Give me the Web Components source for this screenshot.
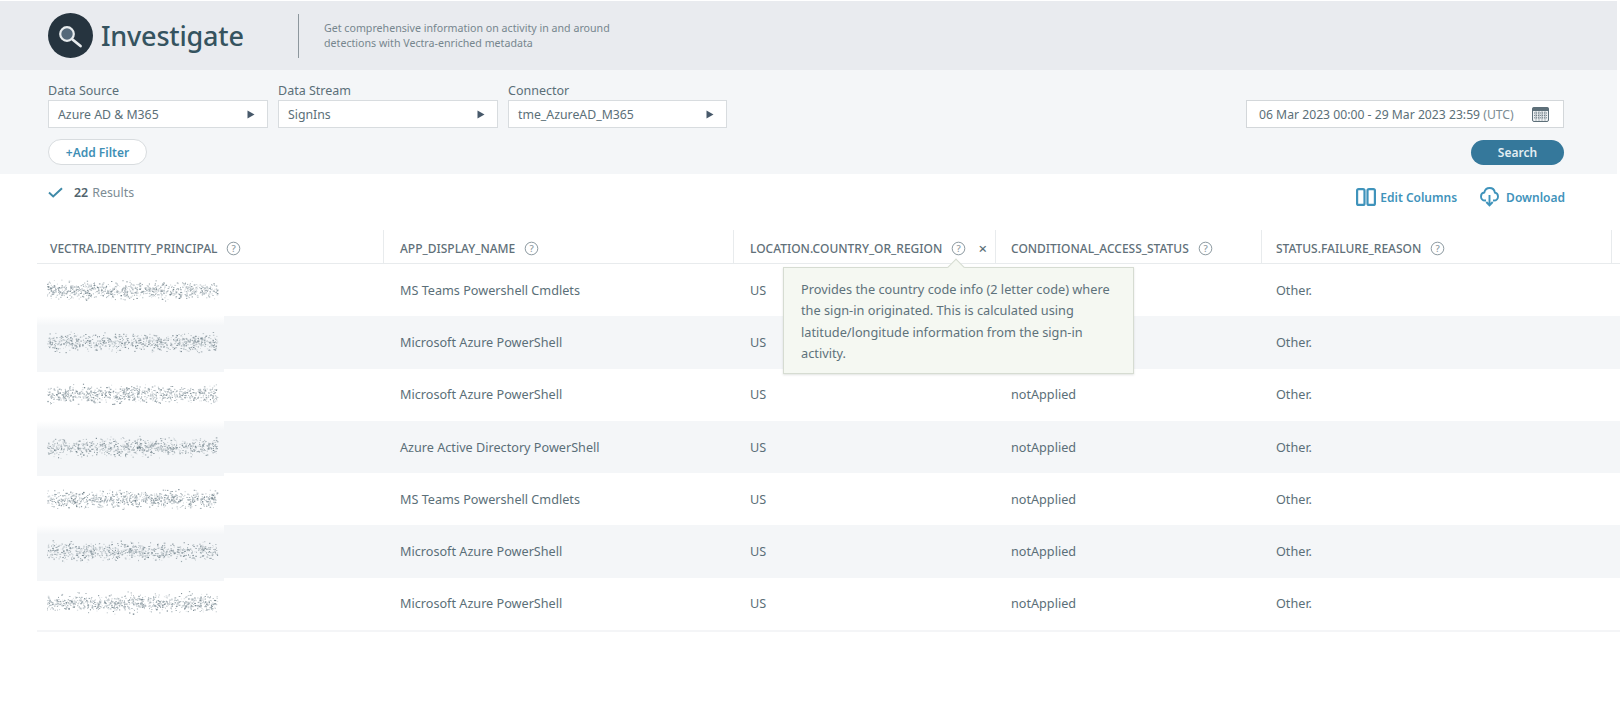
<!DOCTYPE html>
<html>
<head>
<meta charset="utf-8">
<title>Investigate</title>
<style>
  body { margin: 0; background: #fff; font-family: "Noto Sans", "Open Sans", sans-serif; color: #5b6f78; }
  investigate-page { width: 1622px; height: 710px; overflow: hidden; }
</style>
</head>
<body>
<investigate-page></investigate-page>
<script>
const ICONS = {
  help: `<svg width="15" height="15" viewBox="0 0 15 15"><circle cx="7.5" cy="7.5" r="6.3" fill="none" stroke="#8d9aa1" stroke-width="1"/><text x="7.5" y="11" text-anchor="middle" font-size="9.5" font-family="Noto Sans" fill="#8d9aa1">?</text></svg>`,
  check: `<svg width="15" height="11" viewBox="0 0 15 11"><path d="M1 5.6 L5.2 9.4 L14 1.2" fill="none" stroke="#3f8aa8" stroke-width="2"/></svg>`,
  caret: `<svg width="8" height="9" viewBox="0 0 8 9"><path d="M0.5 0.5 L7.5 4.5 L0.5 8.5 Z" fill="#47596a"/></svg>`,
  calendar: `<svg width="17" height="15" viewBox="0 0 17 15"><rect x="0.5" y="0.5" width="16" height="14" rx="1.5" fill="#eef1f3" stroke="#5d6f79"/><rect x="0.5" y="0.5" width="16" height="3.5" fill="#5d6f79"/><path d="M2 6h13M2 8.4h13M2 10.8h13M4 4.5v9M7 4.5v9M10 4.5v9M13 4.5v9" stroke="#5d6f79" stroke-width=".9" stroke-dasharray="1.2 .8"/></svg>`,
  columns: `<svg width="20" height="18" viewBox="0 0 20 18"><rect x="1.1" y="1.1" width="7.4" height="15.8" rx="1.5" fill="none" stroke="#3f93bb" stroke-width="2.2"/><rect x="11.5" y="1.1" width="7.4" height="15.8" rx="1.5" fill="none" stroke="#3f93bb" stroke-width="2.2"/></svg>`,
  download: `<svg width="19" height="20" viewBox="0 0 19 20"><path d="M6 13.5 H5 C2.5 13.5 1 11.6 1 9.4 C1 7.3 2.4 5.7 4.3 5.5 C4.9 2.8 7 1 9.6 1 C12.4 1 14.5 3 14.9 5.6 C16.8 5.9 18 7.5 18 9.4 C18 11.6 16.5 13.5 14 13.5 H13" fill="none" stroke="#3f93bb" stroke-width="1.9"/><path d="M9.5 8 V18 M6.3 15 L9.5 18.4 L12.7 15" fill="none" stroke="#3f93bb" stroke-width="1.9"/></svg>`,
  search: `<svg width="45" height="45" viewBox="0 0 45 45"><circle cx="22.5" cy="22.5" r="22.5" fill="#26343f"/><circle cx="19" cy="21" r="6.8" fill="#55697a" stroke="#e8ecee" stroke-width="2.2"/><path d="M24.5 26.5 L32.5 33" stroke="#e8ecee" stroke-width="2.8" stroke-linecap="round"/></svg>`
};

class AppHeader extends HTMLElement {
  constructor() {
    super();
    this.attachShadow({ mode: 'open' }).innerHTML = `
      <style>
        :host { display: flex; align-items: center; height: 69px; margin-top: 1px; background: #e9ebef; padding-left: 48px; }
        .logo { display: flex; width: 45px; height: 45px; margin-right: 8px; }
        h1 { margin: 0; width: 197px; font: 500 27px/44px "Noto Sans", sans-serif; color: #35535f; letter-spacing: -.2px; }
        .rule { width: 1px; height: 44px; background: #8d979d; margin-right: 25px; }
        p { margin: 0; font-size: 10.65px; line-height: 15px; color: #76868e; }
      </style>
      <div class="logo">${ICONS.search}</div>
      <h1>Investigate</h1>
      <div class="rule"></div>
      <p>Get comprehensive information on activity in and around<br>detections with Vectra-enriched metadata</p>`;
  }
}

class FilterSelect extends HTMLElement {
  constructor() {
    super();
    this.attachShadow({ mode: 'open' }).innerHTML = `
      <style>
        :host { display: block; width: 220px; }
        label { display: block; font-size: 12.5px; line-height: 18px; color: #5b6f78; }
        div { display: flex; justify-content: space-between; align-items: center; box-sizing: border-box; height: 28px; padding: 0 12px 0 9px; background: #fff; border: 1px solid #d8dcdf; font-size: 12.3px; color: #5b6f78; }
      </style>
      <label>${this.getAttribute('label')}</label>
      <div><span>${this.getAttribute('value')}</span>${ICONS.caret}</div>`;
  }
}

class FilterBar extends HTMLElement {
  constructor() {
    super();
    this.attachShadow({ mode: 'open' }).innerHTML = `
      <style>
        :host { display: flex; justify-content: space-between; box-sizing: border-box; height: 104px; background: #f4f6f8; padding: 12px 53px 0 48px; }
        .selects { display: flex; gap: 10px; }
        .add { display: flex; align-items: center; justify-content: center; box-sizing: border-box; width: 99px; height: 26px; margin-top: 11px; border: 1px solid #d8dcdf; border-radius: 13px; background: #fff; font-size: 12px; font-weight: 600; color: #3f8fb5; }
        .right { display: flex; flex-direction: column; align-items: flex-end; padding-top: 18px; }
        .date { display: flex; justify-content: space-between; align-items: center; box-sizing: border-box; width: 318px; height: 28px; padding: 0 14px 0 12px; background: #fff; border: 1px solid #d3d7da; font-size: 12.2px; color: #5b6f78; }
        .date span span { color: #7c8c94; }
        .search { display: flex; align-items: center; justify-content: center; width: 93px; height: 25px; margin-top: 12px; border-radius: 13px; background: #35789b; color: #e3eef3; font-size: 12px; font-weight: 600; }
      </style>
      <div>
        <div class="selects">
          <filter-select label="Data Source" value="Azure AD &amp; M365"></filter-select>
          <filter-select label="Data Stream" value="SignIns"></filter-select>
          <filter-select label="Connector" value="tme_AzureAD_M365" style="width:219px"></filter-select>
        </div>
        <div class="add">+Add Filter</div>
      </div>
      <div class="right">
        <div class="date"><span>06 Mar 2023 00:00 - 29 Mar 2023 23:59 <span>(UTC)</span></span>${ICONS.calendar}</div>
        <div class="search">Search</div>
      </div>`;
  }
}

class ResultsBar extends HTMLElement {
  constructor() {
    super();
    this.attachShadow({ mode: 'open' }).innerHTML = `
      <style>
        :host { display: flex; justify-content: space-between; box-sizing: border-box; height: 56px; padding: 11px 57px 0 48px; }
        .count { display: flex; align-items: center; height: 14px; font-size: 12.4px; color: #7c8c94; }
        .count svg { margin-right: 11px; }
        .count b { margin-right: 4px; color: #51646d; font-weight: 600; }
        .actions { display: flex; gap: 23px; margin-top: 2px; }
        .action { display: flex; align-items: center; gap: 4px; height: 20px; font-size: 12px; font-weight: 600; color: #3f93bb; }
      </style>
      <div class="count">${ICONS.check}<b>22</b> Results</div>
      <div class="actions">
        <div class="action">${ICONS.columns}Edit Columns</div>
        <div class="action" style="gap:7px">${ICONS.download}Download</div>
      </div>`;
  }
}

// grey speckle standing in for the blurred-out identity names
class RedactedName extends HTMLElement {
  connectedCallback() {
    let seed = Number(this.getAttribute('seed')) * 7919 + 13;
    const rnd = () => (seed = (seed * 16807) % 2147483647) / 2147483647;
    let dots = '';
    for (let i = 0; i < 800; i++) {
      const x = 4 + rnd() * 170;
      const y = 15 + (rnd() + rnd() + rnd() - 1.5) * 8;
      const shade = ['#aab4b9', '#c3cbcf', '#8f9ca3', '#d8dde0', '#76868e', '#a0adb3'][Math.floor(rnd() * 6)];
      dots += `<rect x="${x.toFixed(1)}" y="${y.toFixed(1)}" width="${(0.6 + rnd() * 1.1).toFixed(1)}" height="${(0.6 + rnd() * .7).toFixed(1)}" fill="${shade}"/>`;
    }
    this.attachShadow({ mode: 'open' }).innerHTML = `
      <style>:host { display: block; width: 182px; height: 30px; }</style>
      <svg width="182" height="30" viewBox="0 0 182 30">${dots}</svg>`;
  }
}

class HelpTip extends HTMLElement {
  constructor() {
    super();
    this.attachShadow({ mode: 'open' }).innerHTML = `
      <style>
        :host { position: absolute; left: 783px; top: 267px; box-sizing: border-box; width: 351px; height: 107px; padding: 11px 17px; background: #f5f8f2; border: 1px solid #d6dcd2; box-shadow: 0 1px 2px rgba(90,100,90,.18); font-size: 12.75px; line-height: 21.3px; color: #5e727b; z-index: 2; white-space: nowrap; }
        i { position: absolute; left: 166px; top: -7px; width: 11px; height: 11px; background: #f5f8f2; border: solid #d6dcd2; border-width: 1px 0 0 1px; transform: rotate(45deg); }
      </style>
      <i></i><slot></slot>`;
  }
}

class DataTable extends HTMLElement {
  constructor() {
    super();
    const heads = ['VECTRA.IDENTITY_PRINCIPAL', 'APP_DISPLAY_NAME', 'LOCATION.COUNTRY_OR_REGION', 'CONDITIONAL_ACCESS_STATUS', 'STATUS.FAILURE_REASON'];
    const apps = ['MS Teams Powershell Cmdlets', 'Microsoft Azure PowerShell', 'Microsoft Azure PowerShell', 'Azure Active Directory PowerShell', 'MS Teams Powershell Cmdlets', 'Microsoft Azure PowerShell', 'Microsoft Azure PowerShell'];
    const headCells = heads.map((h, i) => `<div class="th">${h}<span class="q">${ICONS.help}</span>${i === 2 ? '<span class="x">×</span>' : ''}</div>`).join('');
    // the first two status cells sit behind the tooltip, so they stay empty
    const rows = apps.map((app, i) => `
      <div class="row">
        <div class="td first"><redacted-name seed="${i + 3}"></redacted-name></div>
        <div class="td">${app}</div>
        <div class="td">US</div>
        <div class="td">${i < 2 ? '' : 'notApplied'}</div>
        <div class="td">Other.</div>
      </div>`).join('');
    this.attachShadow({ mode: 'open' }).innerHTML = `
      <style>
        :host { display: block; width: 1583px; margin-left: 37px; border-bottom: 2px solid #f4f5f7; }
        .head, .row { display: grid; grid-template-columns: 347px 350px 262px 266px 350px 8px; }
        .head { height: 34px; border-bottom: 1px solid #e8ebed; box-sizing: border-box; }
        .th { display: flex; align-items: center; padding: 3px 8px 0 13px; border-right: 1px solid #e8ebed; font-size: 12px; font-weight: 500; color: #5f7079; white-space: nowrap; }
        .th:nth-child(n+2) { padding-left: 16px; }
        .th:nth-child(n+4) { padding-left: 15px; }
        .th:nth-child(n+5) { padding-left: 14px; }
        .th .q { display: flex; margin-left: 9px; }
        .th .x { margin-left: auto; font-size: 15px; color: #5b6f78; }
        .row { height: 52.3px; align-items: center; }
        .row:nth-child(even) { background: #f4f6f8; }
        .td { padding: 0 0 1px 16px; font-size: 12.65px; color: #5b6f78; white-space: nowrap; }
        .td:nth-child(n+4) { padding-left: 15px; }
        .td:nth-child(n+5) { padding-left: 14px; }
        .td.first { display: flex; align-items: center; align-self: stretch; justify-self: start; box-sizing: border-box; width: 187px; padding-left: 6px; }
        .row:nth-child(even) .td.first { background: linear-gradient(#fff, #f4f6f8 18%); box-shadow: 0 3px 0 #f4f6f8; }
      </style>
      <div class="head">${headCells}</div>
      <div>${rows}</div>`;
  }
}

class InvestigatePage extends HTMLElement {
  constructor() {
    super();
    this.attachShadow({ mode: 'open' }).innerHTML = `
      <style>
        :host { display: block; position: relative; }
        .band { width: 1617px; }
      </style>
      <div class="band"><app-header></app-header><filter-bar></filter-bar></div>
      <results-bar></results-bar>
      <data-table></data-table>
      <help-tip>Provides the country code info (2 letter code) where<br>the sign-in originated. This is calculated using<br>latitude/longitude information from the sign-in<br>activity.</help-tip>`;
  }
}

customElements.define('app-header', AppHeader);
customElements.define('filter-select', FilterSelect);
customElements.define('filter-bar', FilterBar);
customElements.define('results-bar', ResultsBar);
customElements.define('redacted-name', RedactedName);
customElements.define('help-tip', HelpTip);
customElements.define('data-table', DataTable);
customElements.define('investigate-page', InvestigatePage);
</script>
</body>
</html>
